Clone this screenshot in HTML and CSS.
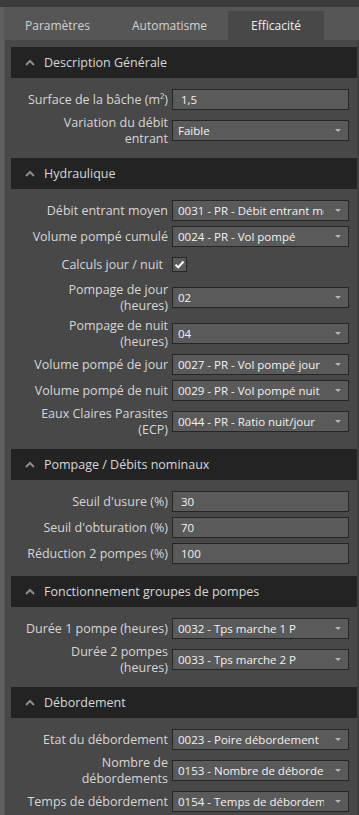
FILE: index.html
```html
<!DOCTYPE html>
<html lang="fr">

<head>
  <meta charset="UTF-8">
  <meta name="viewport" content="width=device-width, initial-scale=1.0">
  <title>Efficacité</title>
  <link rel="stylesheet" href="styles.css">
</head>

<body>
  <div class="window">
    <div class="edge"></div>
    <div class="main">
      <div class="tabs">
        <div class="tab">Paramètres</div>
        <div class="tab">Automatisme</div>
        <div class="tab active">Efficacité</div>
      </div>

      <div class="panel">
        <!-- Description -->
        <section class="group">
          <div class="group-head">
            <svg class="chevron" width="10" height="7" viewBox="0 0 10 7"><polyline points="1,6 5,2 9,6" /></svg>
            <span>Description Générale</span>
          </div>
          <div class="group-body">
            <div class="row">
              <label>Surface de la bâche (m²)</label>
              <div class="field">1,5</div>
            </div>
            <div class="row">
              <label>Variation du débit<br>entrant</label>
              <div class="select"><span class="value">Faible</span><span class="arrow"></span></div>
            </div>
          </div>
        </section>

        <!-- Hydraulique -->
        <section class="group">
          <div class="group-head">
            <svg class="chevron" width="10" height="7" viewBox="0 0 10 7"><polyline points="1,6 5,2 9,6" /></svg>
            <span>Hydraulique</span>
          </div>
          <div class="group-body">
            <div class="row">
              <label>Débit entrant moyen</label>
              <div class="select"><span class="value">0031 - PR - Débit entrant moyen</span><span class="arrow"></span></div>
            </div>
            <div class="row">
              <label>Volume pompé cumulé</label>
              <div class="select"><span class="value">0024 - PR - Vol pompé</span><span class="arrow"></span></div>
            </div>
            <div class="row check-row">
              <label class="check-label">Calculs jour / nuit</label>
              <div class="checkbox">
                <svg width="11" height="9" viewBox="0 0 11 9"><polyline points="1.5,4.8 4.2,7.3 9.5,1.5" /></svg>
              </div>
            </div>
            <div class="row">
              <label>Pompage de jour<br>(heures)</label>
              <div class="select"><span class="value">02</span><span class="arrow"></span></div>
            </div>
            <div class="row">
              <label>Pompage de nuit<br>(heures)</label>
              <div class="select"><span class="value">04</span><span class="arrow"></span></div>
            </div>
            <div class="row">
              <label>Volume pompé de jour</label>
              <div class="select"><span class="value">0027 - PR - Vol pompé jour</span><span class="arrow"></span></div>
            </div>
            <div class="row">
              <label>Volume pompé de nuit</label>
              <div class="select"><span class="value">0029 - PR - Vol pompé nuit</span><span class="arrow"></span></div>
            </div>
            <div class="row">
              <label>Eaux Claires Parasites<br>(ECP)</label>
              <div class="select"><span class="value">0044 - PR - Ratio nuit/jour</span><span class="arrow"></span></div>
            </div>
          </div>
        </section>

        <!-- Pompage -->
        <section class="group">
          <div class="group-head">
            <svg class="chevron" width="10" height="7" viewBox="0 0 10 7"><polyline points="1,6 5,2 9,6" /></svg>
            <span>Pompage / Débits nominaux</span>
          </div>
          <div class="group-body">
            <div class="row">
              <label>Seuil d'usure (%)</label>
              <div class="field">30</div>
            </div>
            <div class="row">
              <label>Seuil d'obturation (%)</label>
              <div class="field">70</div>
            </div>
            <div class="row">
              <label>Réduction 2 pompes (%)</label>
              <div class="field">100</div>
            </div>
          </div>
        </section>

        <!-- Groupes de pompes -->
        <section class="group">
          <div class="group-head">
            <svg class="chevron" width="10" height="7" viewBox="0 0 10 7"><polyline points="1,6 5,2 9,6" /></svg>
            <span>Fonctionnement groupes de pompes</span>
          </div>
          <div class="group-body">
            <div class="row">
              <label>Durée 1 pompe (heures)</label>
              <div class="select"><span class="value">0032 - Tps marche 1 P</span><span class="arrow"></span></div>
            </div>
            <div class="row">
              <label>Durée 2 pompes<br>(heures)</label>
              <div class="select"><span class="value">0033 - Tps marche 2 P</span><span class="arrow"></span></div>
            </div>
          </div>
        </section>

        <!-- Débordement -->
        <section class="group">
          <div class="group-head">
            <svg class="chevron" width="10" height="7" viewBox="0 0 10 7"><polyline points="1,6 5,2 9,6" /></svg>
            <span>Débordement</span>
          </div>
          <div class="group-body">
            <div class="row">
              <label>Etat du débordement</label>
              <div class="select"><span class="value">0023 - Poire débordement</span><span class="arrow"></span></div>
            </div>
            <div class="row">
              <label>Nombre de<br>débordements</label>
              <div class="select"><span class="value">0153 - Nombre de débordements</span><span class="arrow"></span></div>
            </div>
            <div class="row">
              <label>Temps de débordement</label>
              <div class="select"><span class="value">0154 - Temps de débordement</span><span class="arrow"></span></div>
            </div>
          </div>
        </section>
      </div>
    </div>
  </div>
</body>

</html>
```

FILE: styles.css
```css
body {
  margin: 0;
  background-color: #3b3b3b;
  font-family: "Open Sans", "Noto Sans", sans-serif;
  font-size: 12.5px;
  color: #d6d6d6;
}

.window {
  display: flex;
  margin-top: 7px;
  min-height: calc(100vh - 7px);
}

.edge {
  width: 4px;
  background-color: #606060;
}

.main {
  flex: 1;
  display: flex;
  flex-direction: column;
  background-color: #565656;
}

/* onglets */
.tabs {
  display: flex;
  height: 33px;
  padding-top: 4px;
  box-sizing: border-box;
  font-size: 12px;
}

.tab {
  padding: 0 21px;
  line-height: 29px;
  color: #d2d2d2;
}

.tab.active {
  padding: 0 23px;
  background-color: #484848;
  color: #ededed;
}

.panel {
  flex: 1;
  margin-left: 1px;
  padding: 7px 0 0 6px;
  border-right: 2px solid #3e3e3e;
  background-color: #484848;
}

/* groupes */
.group-head {
  display: flex;
  align-items: center;
  gap: 9px;
  height: 31px;
  padding-left: 14px;
  background-color: #232323;
  font-size: 12.5px;
  color: #d8d8d8;
}

.chevron {
  fill: none;
  stroke: #8c8c8c;
  stroke-width: 2;
}

.group-body {
  display: flex;
  flex-direction: column;
  gap: 5px;
  padding: 11px 8px 12px 0;
}

.row {
  display: grid;
  grid-template-columns: 1fr 177px;
  column-gap: 4px;
  align-items: center;
  min-height: 21px;
}

.row label {
  text-align: right;
  line-height: 15.5px;
  white-space: nowrap;
}

.check-row {
  min-height: 25px;
}

.check-label {
  padding-right: 5px;
}

/* champs */
.field,
.select {
  height: 21px;
  box-sizing: border-box;
  border: 1px solid #262626;
  background-color: #5a5a5a;
  color: #f2f2f2;
  font-size: 11.5px;
  line-height: 19px;
}

.field {
  padding: 0 8px;
}

.select {
  display: flex;
  align-items: center;
  padding: 0 7px 0 5px;
}

.value {
  flex: 1;
  overflow: hidden;
  white-space: nowrap;
}

.arrow {
  margin-left: 11px;
  width: 0;
  height: 0;
  border-left: 3px solid transparent;
  border-right: 3px solid transparent;
  border-top: 3px solid #b4b4b4;
}

.checkbox {
  width: 15px;
  height: 15px;
  box-sizing: border-box;
  border: 1px solid #262626;
  background-color: #5a5a5a;
  display: flex;
  align-items: center;
  justify-content: center;
}

.checkbox polyline {
  fill: none;
  stroke: #ffffff;
  stroke-width: 2;
}
```
